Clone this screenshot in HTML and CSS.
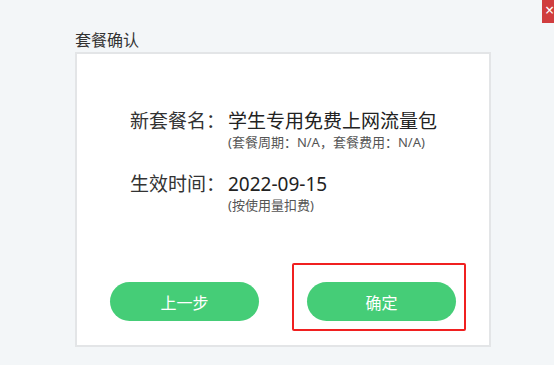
FILE: index.html
```html
<!DOCTYPE html>
<html lang="zh-CN">
<head>
  <meta charset="UTF-8">
  <meta name="viewport" content="width=device-width, initial-scale=1.0">
  <title>套餐确认</title>
  <link rel="stylesheet" href="styles.css">
</head>
<body>
  <div class="close">×</div>
  <div class="page">
    <h2 class="title">套餐确认</h2>
    <div class="card">
      <div class="info">
        <div class="row">
          <span class="label">新套餐名：</span>
          <div class="value">
            <div class="main">学生专用免费上网流量包</div>
            <div class="sub">(套餐周期：N/A，套餐费用：N/A)</div>
          </div>
        </div>
        <div class="row">
          <span class="label">生效时间：</span>
          <div class="value">
            <div class="main">2022-09-15</div>
            <div class="sub">(按使用量扣费)</div>
          </div>
        </div>
      </div>
      <div class="actions">
        <button class="btn">上一步</button>
        <button class="btn">确定</button>
        <div class="mark"></div>
      </div>
    </div>
  </div>
</body>
</html>
```

FILE: styles.css
```css
body {
  margin: 0;
  background-color: #f3f6f8;
  font-family: "Noto Sans", "Noto Sans CJK SC", sans-serif;
  color: #333;
  position: relative;
}
.close {
  position: absolute;
  top: 0;
  right: 0;
  width: 12px;
  height: 23px;
  background: #d03d3e;
  color: #fff;
  font-size: 16px;
  line-height: 20px;
  overflow: hidden;
  text-indent: 3px;
}
.page {
  padding: 29px 0 0 75px;
}
.title {
  margin: 0 0 1px;
  font-size: 16px;
  font-weight: normal;
  line-height: 22px;
  color: #333;
}
.card {
  display: flex;
  flex-direction: column;
  width: 412px;
  height: 291px;
  background: #fff;
  border: 2px solid #e3e5e7;
}
.info {
  padding: 54px 0 0 53px;
}
.row {
  display: flex;
  margin-bottom: 20px;
}
.label {
  width: 98px;
  font-size: 19px;
  line-height: 26px;
  color: #333;
}
.main {
  font-size: 19px;
  line-height: 26px;
  color: #222;
}
.sub {
  font-size: 13px;
  line-height: 17px;
  color: #555;
}
.actions {
  position: relative;
  display: flex;
  gap: 48px;
  margin-top: auto;
  padding: 0 0 24px 33px;
}
.btn {
  width: 149px;
  height: 39px;
  border: none;
  border-radius: 20px;
  background: #45cd77;
  color: #fff;
  font-family: inherit;
  font-size: 16px;
}
.mark {
  position: absolute;
  left: 215px;
  top: -19px;
  width: 170px;
  height: 64px;
  border: 2px solid #f02020;
  border-radius: 2px;
}
```
